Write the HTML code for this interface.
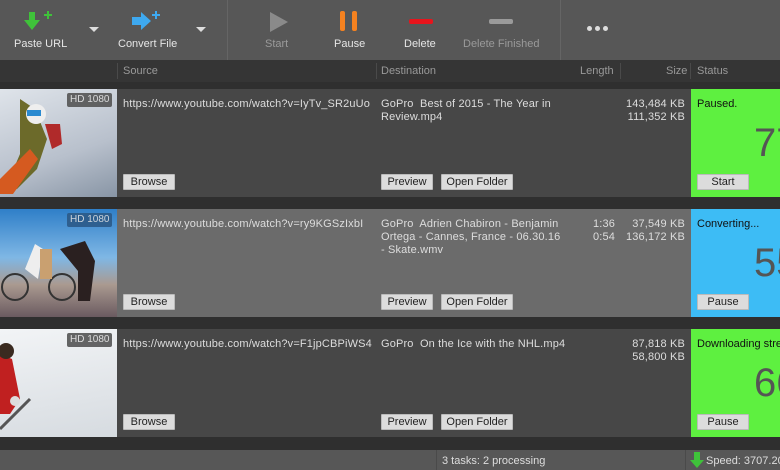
<!DOCTYPE html>
<html><head><meta charset="utf-8"><style>
*{margin:0;padding:0;box-sizing:border-box}
body{width:780px;height:470px;overflow:hidden;background:#2f2f2f;font-family:"Liberation Sans",sans-serif;font-size:11px;color:#ddd;position:relative}
.a{position:absolute}
.tb{left:0;top:0;width:780px;height:60px;background:#575757}
.tl{font-size:11px;color:#e6e6e6;top:38px;white-space:nowrap}
.dis{color:#9a9a9a}
.hd{left:0;top:60px;width:780px;height:22px;background:#353535;color:#999}
.hd span{position:absolute;top:5px}
.sep{position:absolute;top:3px;width:1px;height:16px;background:#4a4a4a}
.row{left:0;width:780px;height:108px}
.btn{position:absolute;height:16px;background:#dcdcdc;border:1px solid #bbb;color:#222;font-size:11px;line-height:14px;text-align:center;border-radius:1px}
.st{position:absolute;left:691px;width:89px;height:108px;color:#111}
.big{position:absolute;left:63px;top:32px;font-size:40px;color:#555;font-family:"Liberation Sans",sans-serif}
.hdb{position:absolute;left:67px;top:4px;background:#555;color:#ddd;font-size:10px;padding:0 3px;height:14px;line-height:14px;border-radius:2px;opacity:.9}
.t{white-space:nowrap;letter-spacing:.15px}
.tx{top:9px}
</style></head><body>
<div class="a tb"></div>
<div class="a" style="left:227px;top:0;width:1px;height:60px;background:#656565"></div>
<div class="a" style="left:560px;top:0;width:1px;height:60px;background:#656565"></div>
<svg class="a" style="left:24px;top:10px" width="34" height="24"><path d="M5 2h6v8h5l-8 10-8-10h5z" fill="#3fc23a"/><path d="M20 5h8M24 1v8" stroke="#3fc23a" stroke-width="2"/></svg>
<div class="a tl" style="left:14px">Paste URL</div>
<div class="a" style="left:89px;top:27px;border:5px solid transparent;border-top:5px solid #ddd"></div>
<svg class="a" style="left:130px;top:10px" width="36" height="24"><path d="M2 7h9V2l10 9-10 9v-5H2z" fill="#3ea9f0"/><path d="M22 5h8M26 1v8" stroke="#3ea9f0" stroke-width="2"/></svg>
<div class="a tl" style="left:118px">Convert File</div>
<div class="a" style="left:196px;top:27px;border:5px solid transparent;border-top:5px solid #ddd"></div>
<svg class="a" style="left:268px;top:11px" width="22" height="22"><path d="M2 1l18 10-18 10z" fill="#8a8a8a"/></svg>
<div class="a tl dis" style="left:265px">Start</div>
<div class="a" style="left:340px;top:11px;width:5px;height:20px;background:#f58220;border-radius:2px"></div>
<div class="a" style="left:352px;top:11px;width:5px;height:20px;background:#f58220;border-radius:2px"></div>
<div class="a tl" style="left:334px">Pause</div>
<div class="a" style="left:409px;top:19px;width:24px;height:5px;background:#e8141c;border-radius:2px"></div>
<div class="a tl" style="left:404px">Delete</div>
<div class="a" style="left:489px;top:19px;width:24px;height:5px;background:#9a9a9a;border-radius:2px"></div>
<div class="a tl dis" style="left:463px">Delete Finished</div>
<div class="a" style="left:587px;top:26px;width:5px;height:5px;border-radius:50%;background:#ddd;box-shadow:8px 0 #ddd,16px 0 #ddd"></div>

<div class="a hd">
<div class="sep" style="left:117px"></div><span style="left:123px">Source</span>
<div class="sep" style="left:376px"></div><span style="left:381px">Destination</span>
<span style="left:580px">Length</span><div class="sep" style="left:620px"></div>
<span style="left:666px">Size</span><div class="sep" style="left:690px"></div><span style="left:697px">Status</span>
</div>

<div class="a row" style="top:89px;background:#474747">
<div class="a" style="left:0;top:0;width:117px;height:108px;background:linear-gradient(160deg,#dfe4ea,#b8c0cc 60%,#8895a5)"><svg width="117" height="108"><path d="M20 10l15 10 12 30-10 30-20 20-12 0 15-35z" fill="#6c6a2a"/><path d="M0 90l30-30 8 10-25 35H0z" fill="#d55a20"/><circle cx="36" cy="25" r="10" fill="#eee"/><rect x="27" y="21" width="14" height="6" fill="#2a8ad0"/><path d="M45 35l15 0 2 20-10 5z" fill="#b02a2a"/></svg><div class="hdb">HD 1080</div></div>
<div class="a t tx" style="left:123px">https://www.youtube.com/watch?v=IyTv_SR2uUo</div>
<div class="a t tx" style="left:381px;line-height:13px">GoPro&nbsp; Best of 2015 - The Year in<br>Review.mp4</div>
<div class="a t tx" style="left:600px;width:85px;text-align:right;line-height:13px">143,484 KB<br>111,352 KB</div>
<div class="btn" style="left:123px;top:85px;width:52px">Browse</div>
<div class="btn" style="left:381px;top:85px;width:52px">Preview</div>
<div class="btn" style="left:441px;top:85px;width:72px">Open Folder</div>
<div class="st" style="top:0;background:#5ef040"><div class="a tx" style="left:6px">Paused.</div><div class="big">77</div><div class="btn" style="left:6px;top:85px;width:52px">Start</div></div>
</div>

<div class="a row" style="top:209px;background:#6b6b6b">
<div class="a" style="left:0;top:0;width:117px;height:108px;background:linear-gradient(180deg,#2f7fc8,#7fb7e5 45%,#aa9a90 70%,#6a5a60)"><svg width="117" height="108"><circle cx="15" cy="78" r="13" stroke="#333" stroke-width="2" fill="none"/><circle cx="62" cy="78" r="13" stroke="#333" stroke-width="2" fill="none"/><path d="M25 60l10-25 8 5-5 30z" fill="#eee"/><path d="M60 40l25-8 10 20-5 40-12 0 0-30z" fill="#2a2020"/><rect x="40" y="40" width="12" height="30" fill="#c9a070"/></svg><div class="hdb" style="background:#2c5a88">HD 1080</div></div>
<div class="a t tx" style="left:123px">https://www.youtube.com/watch?v=ry9KGSzIxbI</div>
<div class="a t tx" style="left:381px;line-height:13px">GoPro&nbsp; Adrien Chabiron - Benjamin<br>Ortega - Cannes, France - 06.30.16<br>- Skate.wmv</div>
<div class="a t tx" style="left:580px;width:35px;text-align:right;line-height:13px">1:36<br>0:54</div>
<div class="a t tx" style="left:600px;width:85px;text-align:right;line-height:13px">37,549 KB<br>136,172 KB</div>
<div class="btn" style="left:123px;top:85px;width:52px">Browse</div>
<div class="btn" style="left:381px;top:85px;width:52px">Preview</div>
<div class="btn" style="left:441px;top:85px;width:72px">Open Folder</div>
<div class="st" style="top:0;background:#3dbcf5"><div class="a tx" style="left:6px">Converting...</div><div class="big">55</div><div class="btn" style="left:6px;top:85px;width:52px">Pause</div></div>
</div>

<div class="a row" style="top:329px;background:#474747">
<div class="a" style="left:0;top:0;width:117px;height:108px;background:linear-gradient(170deg,#f2f4f6,#d6dbe0)"><svg width="117" height="108"><path d="M0 25l12 5 8 40-10 15H0z" fill="#c02020"/><circle cx="6" cy="22" r="8" fill="#3a2a20"/><path d="M0 100l30-30" stroke="#555" stroke-width="3"/><circle cx="15" cy="72" r="5" fill="#ddd"/></svg><div class="hdb">HD 1080</div></div>
<div class="a t tx" style="left:123px">https://www.youtube.com/watch?v=F1jpCBPiWS4</div>
<div class="a t tx" style="left:381px">GoPro&nbsp; On the Ice with the NHL.mp4</div>
<div class="a t tx" style="left:600px;width:85px;text-align:right;line-height:13px">87,818 KB<br>58,800 KB</div>
<div class="btn" style="left:123px;top:85px;width:52px">Browse</div>
<div class="btn" style="left:381px;top:85px;width:52px">Preview</div>
<div class="btn" style="left:441px;top:85px;width:72px">Open Folder</div>
<div class="st" style="top:0;background:#5ef040"><div class="a tx" style="left:6px;white-space:nowrap">Downloading stream</div><div class="big">66</div><div class="btn" style="left:6px;top:85px;width:52px">Pause</div></div>
</div>

<div class="a" style="left:0;top:450px;width:780px;height:20px;background:#575757"></div>
<div class="a" style="left:436px;top:450px;width:1px;height:20px;background:#4a4a4a"></div>
<div class="a" style="left:685px;top:450px;width:1px;height:20px;background:#4a4a4a"></div>
<div class="a" style="left:442px;top:455px;color:#ddd">3 tasks: 2 processing</div>
<svg class="a" style="left:690px;top:452px" width="14" height="16"><path d="M4 0h6v8h4l-7 8-7-8h4z" fill="#3fc23a"/></svg>
<div class="a" style="left:706px;top:455px;color:#ddd;white-space:nowrap">Speed: 3707.20</div>
</body></html>
